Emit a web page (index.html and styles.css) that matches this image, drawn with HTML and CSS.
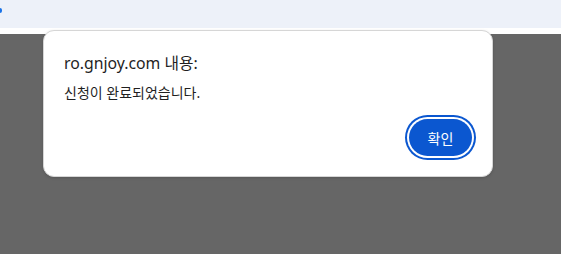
FILE: index.html
```html
<!DOCTYPE html>
<html lang="ko">
<head>
<meta charset="utf-8">
<link rel="stylesheet" href="styles.css">
</head>
<body>
<div class="topbar"><span class="dot"></span></div>
<div class="gap"></div>
<div class="page"></div>
<div class="dialog" role="alertdialog">
  <div class="title">ro.gnjoy.com 내용:</div>
  <div class="message">신청이 완료되었습니다.</div>
  <div class="actions">
    <button class="ok">확인</button>
  </div>
</div>
</body>
</html>
```
FILE: styles.css
```css
html, body {
  margin: 0;
  padding: 0;
  height: 100%;
}
body {
  display: flex;
  flex-direction: column;
  font-family: "Noto Sans", "Noto Sans CJK KR", sans-serif;
  background: #666666;
  overflow: hidden;
}
.topbar {
  height: 28px;
  background: #edf1f9;
  position: relative;
  flex: none;
}
.dot {
  position: absolute;
  left: -2px;
  top: 8px;
  width: 4px;
  height: 5px;
  border-radius: 2px;
  background: #1a73e8;
}
.gap {
  height: 6px;
  background: #ffffff;
  flex: none;
}
.page {
  flex: 1;
  background: #666666;
}
.dialog {
  position: absolute;
  left: 43px;
  top: 30px;
  width: 448px;
  height: 145px;
  background: #ffffff;
  border: 1px solid #d6d6d6;
  border-radius: 11px;
  box-shadow: 0 1px 3px rgba(0,0,0,0.15);
  display: flex;
  flex-direction: column;
}
.title {
  margin: 22px 0 0 20px;
  font-size: 15.8px;
  color: #1f1f1f;
  line-height: 20px;
}
.message {
  margin: 11px 0 0 20px;
  font-size: 14px;
  color: #1f1f1f;
  line-height: 18px;
}
.actions {
  display: flex;
  justify-content: flex-end;
  padding: 0 20px 0 0;
  margin-top: 17px;
}
.ok {
  width: 63px;
  height: 37px;
  border: none;
  border-radius: 19px;
  background: #0b57d0;
  color: #ffffff;
  font-family: "Noto Sans CJK KR", sans-serif;
  font-size: 14px;
  box-shadow: 0 0 0 2px #ffffff, 0 0 0 4px #0b57d0;
  padding: 0;
}
```
